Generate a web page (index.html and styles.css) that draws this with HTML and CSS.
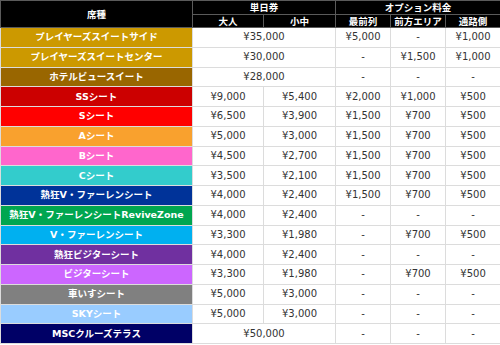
FILE: index.html
```html
<!DOCTYPE html>
<html lang="ja">
<head>
<meta charset="utf-8">
<link rel="stylesheet" href="styles.css">
</head>
<body>
<table class="price">
  <colgroup>
    <col class="c-seat"><col class="c-adult"><col class="c-child"><col class="c-opt"><col class="c-opt"><col class="c-opt">
  </colgroup>
  <thead>
    <tr class="h1">
      <th rowspan="2">席種</th>
      <th colspan="2">単日券</th>
      <th colspan="3">オプション料金</th>
    </tr>
    <tr class="h2">
      <th>大人</th><th>小中</th><th>最前列</th><th>前方エリア</th><th>通路側</th>
    </tr>
  </thead>
  <tbody>
    <tr><th class="s-gold">プレイヤーズスイートサイド</th><td colspan="2">¥35,000</td><td>¥5,000</td><td>-</td><td>¥1,000</td></tr>
    <tr><th class="s-gold">プレイヤーズスイートセンター</th><td colspan="2">¥30,000</td><td>-</td><td>¥1,500</td><td>¥1,000</td></tr>
    <tr><th class="s-brown">ホテルビュースイート</th><td colspan="2">¥28,000</td><td>-</td><td>-</td><td>-</td></tr>
    <tr><th class="s-ss">SSシート</th><td>¥9,000</td><td>¥5,400</td><td>¥2,000</td><td>¥1,000</td><td>¥500</td></tr>
    <tr><th class="s-s">Sシート</th><td>¥6,500</td><td>¥3,900</td><td>¥1,500</td><td>¥700</td><td>¥500</td></tr>
    <tr><th class="s-a">Aシート</th><td>¥5,000</td><td>¥3,000</td><td>¥1,500</td><td>¥700</td><td>¥500</td></tr>
    <tr><th class="s-b">Bシート</th><td>¥4,500</td><td>¥2,700</td><td>¥1,500</td><td>¥700</td><td>¥500</td></tr>
    <tr><th class="s-c">Cシート</th><td>¥3,500</td><td>¥2,100</td><td>¥1,500</td><td>¥700</td><td>¥500</td></tr>
    <tr><th class="s-vf">熱狂V・ファーレンシート</th><td>¥4,000</td><td>¥2,400</td><td>¥1,500</td><td>¥700</td><td>¥500</td></tr>
    <tr><th class="s-rz">熱狂V・ファーレンシートReviveZone</th><td>¥4,000</td><td>¥2,400</td><td>-</td><td>-</td><td>-</td></tr>
    <tr><th class="s-v">V・ファーレンシート</th><td>¥3,300</td><td>¥1,980</td><td>-</td><td>¥700</td><td>¥500</td></tr>
    <tr><th class="s-vis-h">熱狂ビジターシート</th><td>¥4,000</td><td>¥2,400</td><td>-</td><td>-</td><td>-</td></tr>
    <tr><th class="s-vis">ビジターシート</th><td>¥3,300</td><td>¥1,980</td><td>-</td><td>¥700</td><td>¥500</td></tr>
    <tr><th class="s-wc">車いすシート</th><td>¥5,000</td><td>¥3,000</td><td>-</td><td>-</td><td>-</td></tr>
    <tr><th class="s-sky">SKYシート</th><td>¥5,000</td><td>¥3,000</td><td>-</td><td>-</td><td>-</td></tr>
    <tr><th class="s-msc">MSCクルーズテラス</th><td colspan="2">¥50,000</td><td>-</td><td>-</td><td>-</td></tr>
  </tbody>
</table>
</body>
</html>
```

FILE: styles.css
```css
html, body {
  margin: 0;
  padding: 0;
  background: #ffffff;
}

.price {
  width: 500px;
  border-collapse: collapse;
  table-layout: fixed;
  font-family: "DejaVu Sans", "Noto Sans CJK JP", sans-serif;
}

.c-seat { width: 192px; }
.c-adult { width: 71px; }
.c-child { width: 72px; }
.c-opt { width: 55px; }

.price th,
.price td {
  padding: 0;
  text-align: center;
  vertical-align: middle;
  white-space: nowrap;
  overflow: hidden;
}

.price thead th {
  background: #000000;
  color: #ffffff;
  font-family: "Noto Sans CJK JP", sans-serif;
  font-weight: 700;
  font-size: 9.5px;
  line-height: 11px;
  border: 1px solid #5a5a5a;
}

.price thead tr.h1 { height: 14px; }
.price thead tr.h2 { height: 13px; }

.price tbody tr { height: 19.75px; }

.price tbody th {
  color: #ffffff;
  font-family: "DejaVu Sans", "Noto Sans CJK JP", sans-serif;
  font-weight: 700;
  font-size: 9.5px;
  line-height: 12px;
  border: 1px solid #dcdcdc;
}

.price tbody td {
  color: #333333;
  font-size: 10px;
  line-height: 12px;
  border: 1px solid #dcdcdc;
  background: #ffffff;
}

.s-gold { background: #cc9900; }
.s-brown { background: #996600; }
.s-ss { background: #cc0000; }
.s-s { background: #ff0000; }
.s-a { background: #f9a12e; }
.s-b { background: #ff66cc; }
.s-c { background: #33cccc; }
.s-vf { background: #003399; }
.s-rz { background: #00a650; }
.s-v { background: #00b0f0; }
.s-vis-h { background: #7030a0; }
.s-vis { background: #cc66ff; }
.s-wc { background: #808080; }
.s-sky { background: #99ccff; }
.s-msc { background: #000066; }
```
